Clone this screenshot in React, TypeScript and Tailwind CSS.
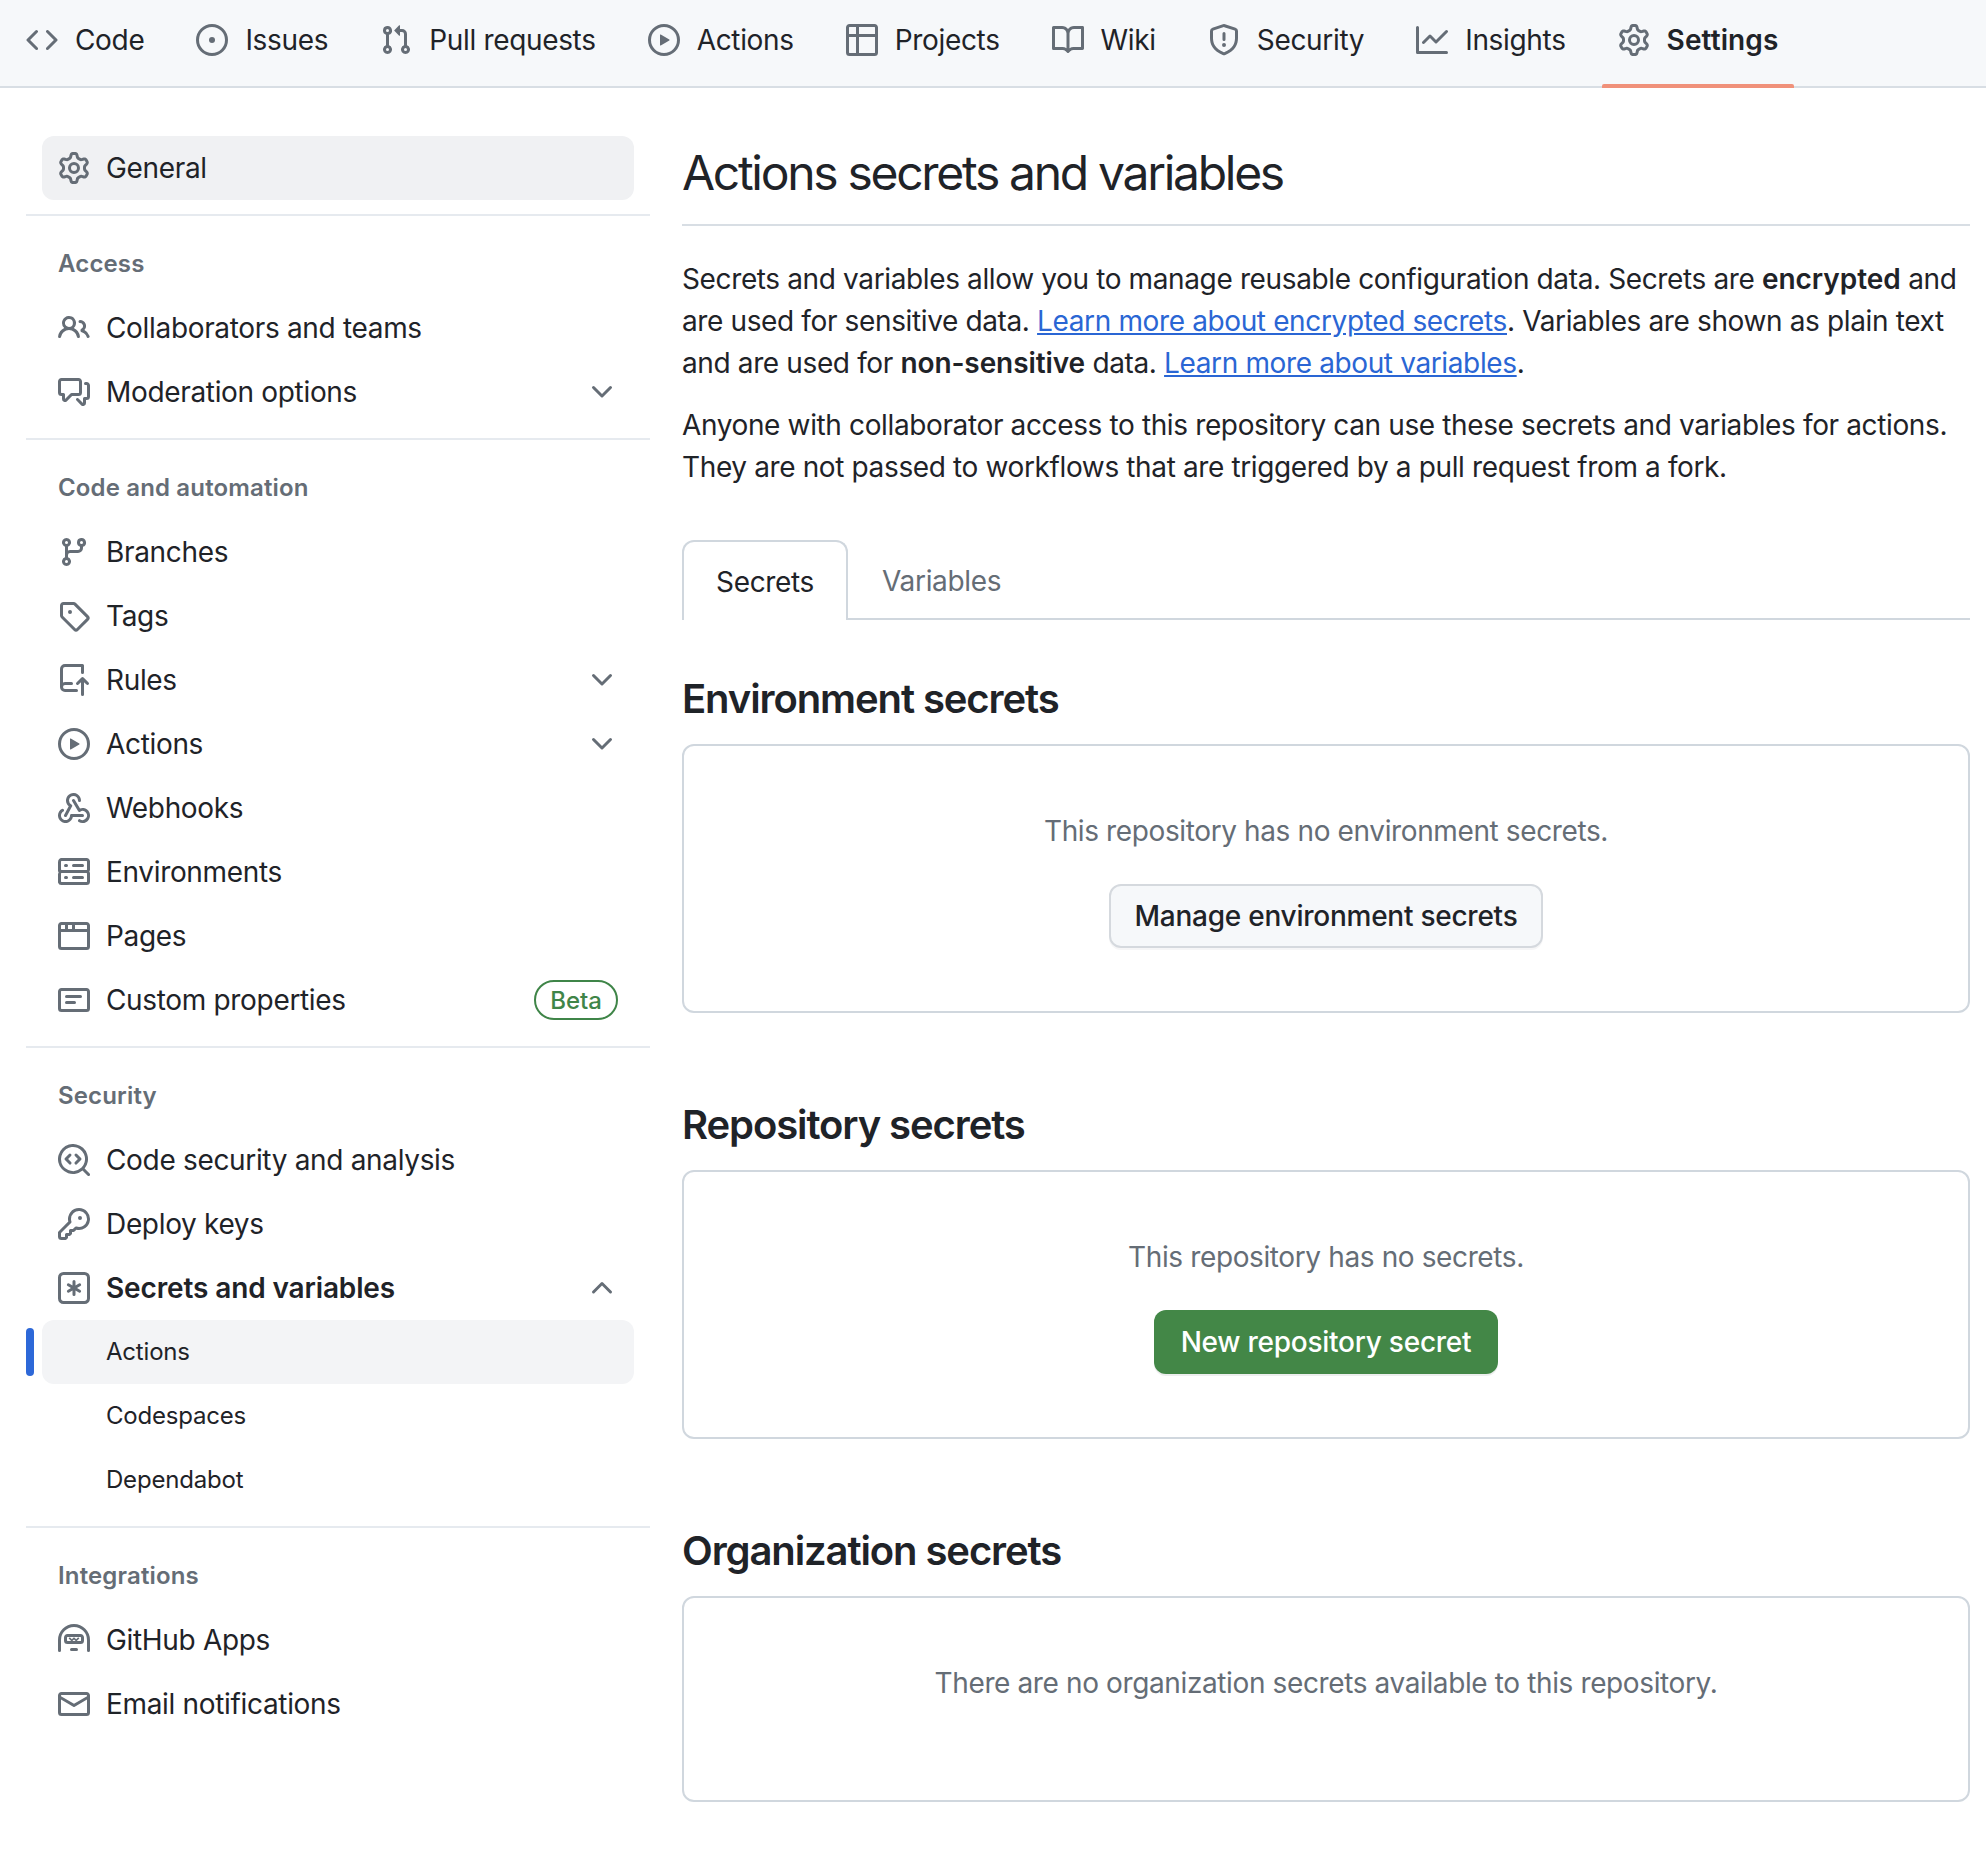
import React from 'react';

// octicons, 16px grid
const octicons: Record<string, string[]> = {
  code: ['m11.28 3.22 4.25 4.25a.75.75 0 0 1 0 1.06l-4.25 4.25a.749.749 0 0 1-1.275-.326.749.749 0 0 1 .215-.734L13.94 8l-3.72-3.72a.749.749 0 0 1 .326-1.275.749.749 0 0 1 .734.215Zm-6.56 0a.751.751 0 0 1 1.042.018.751.751 0 0 1 .018 1.042L2.06 8l3.72 3.72a.749.749 0 0 1-.326 1.275.749.749 0 0 1-.734-.215L.47 8.53a.75.75 0 0 1 0-1.06Z'],
  issue: ['M8 9.5a1.5 1.5 0 1 0 0-3 1.5 1.5 0 0 0 0 3Z', 'M8 0a8 8 0 1 1 0 16A8 8 0 0 1 8 0ZM1.5 8a6.5 6.5 0 1 0 13 0 6.5 6.5 0 0 0-13 0Z'],
  pull: ['M1.5 3.25a2.25 2.25 0 1 1 3 2.122v5.256a2.251 2.251 0 1 1-1.5 0V5.372A2.25 2.25 0 0 1 1.5 3.25Zm5.677-.177L9.573.677A.25.25 0 0 1 10 .854V2.5h1A2.5 2.5 0 0 1 13.5 5v5.628a2.251 2.251 0 1 1-1.5 0V5a1 1 0 0 0-1-1h-1v1.646a.25.25 0 0 1-.427.177L7.177 3.427a.25.25 0 0 1 0-.354ZM3.75 2.5a.75.75 0 1 0 0 1.5.75.75 0 0 0 0-1.5Zm0 9.5a.75.75 0 1 0 0 1.5.75.75 0 0 0 0-1.5Zm8.25.75a.75.75 0 1 0 1.5 0 .75.75 0 0 0-1.5 0Z'],
  play: ['M8 0a8 8 0 1 1 0 16A8 8 0 0 1 8 0ZM1.5 8a6.5 6.5 0 1 0 13 0 6.5 6.5 0 0 0-13 0Zm4.879-2.773 4.264 2.559a.25.25 0 0 1 0 .428l-4.264 2.559A.25.25 0 0 1 6 10.559V5.442a.25.25 0 0 1 .379-.215Z'],
  table: ['M0 1.75C0 .784.784 0 1.75 0h12.5C15.216 0 16 .784 16 1.75v12.5A1.75 1.75 0 0 1 14.25 16H1.75A1.75 1.75 0 0 1 0 14.25ZM6.5 6.5v8h7.75a.25.25 0 0 0 .25-.25V6.5Zm8-1.5V1.75a.25.25 0 0 0-.25-.25H6.5V5Zm-13 1.5v7.75c0 .138.112.25.25.25H5v-8ZM5 5V1.5H1.75a.25.25 0 0 0-.25.25V5Z'],
  book: ['M0 1.75A.75.75 0 0 1 .75 1h4.253c1.227 0 2.317.59 3 1.501A3.743 3.743 0 0 1 11.006 1h4.245a.75.75 0 0 1 .75.75v10.5a.75.75 0 0 1-.75.75h-4.507a2.25 2.25 0 0 0-1.591.659l-.622.621a.75.75 0 0 1-1.06 0l-.622-.621A2.25 2.25 0 0 0 5.258 13H.75a.75.75 0 0 1-.75-.75Zm7.251 10.324.004-5.073-.002-2.253A2.25 2.25 0 0 0 5.003 2.5H1.5v9h3.757a3.75 3.75 0 0 1 1.994.574ZM8.755 4.75l-.004 7.322a3.752 3.752 0 0 1 1.992-.572H14.5v-9h-3.495a2.25 2.25 0 0 0-2.25 2.25Z'],
  shield: ['M7.467.133a1.748 1.748 0 0 1 1.066 0l5.25 1.68A1.75 1.75 0 0 1 15 3.48V7c0 1.566-.32 3.182-1.303 4.682-.983 1.498-2.585 2.813-5.032 3.855a1.697 1.697 0 0 1-1.33 0c-2.447-1.042-4.049-2.357-5.032-3.855C1.32 10.182 1 8.566 1 7V3.48a1.75 1.75 0 0 1 1.217-1.667Zm.61 1.429a.25.25 0 0 0-.153 0l-5.25 1.68a.25.25 0 0 0-.174.238V7c0 1.358.275 2.666 1.057 3.86.784 1.194 2.121 2.34 4.366 3.297a.196.196 0 0 0 .154 0c2.245-.956 3.582-2.104 4.366-3.298C13.225 9.666 13.5 8.36 13.5 7V3.48a.251.251 0 0 0-.174-.237l-5.25-1.68ZM8.75 4.75v3a.75.75 0 0 1-1.5 0v-3a.75.75 0 0 1 1.5 0ZM9 10.5a1 1 0 1 1-2 0 1 1 0 0 1 2 0Z'],
  graph: ['M1.5 1.75V13.5h13.75a.75.75 0 0 1 0 1.5H.75a.75.75 0 0 1-.75-.75V1.75a.75.75 0 0 1 1.5 0Zm14.28 2.53-5.25 5.25a.75.75 0 0 1-1.06 0L7 7.06 4.28 9.78a.751.751 0 0 1-1.042-.018.751.751 0 0 1-.018-1.042l3.25-3.25a.75.75 0 0 1 1.06 0L10 7.94l4.72-4.72a.751.751 0 0 1 1.042.018.751.751 0 0 1 .018 1.042Z'],
  gear: ['M8 0a8.2 8.2 0 0 1 .701.031C9.444.095 9.99.645 10.16 1.29l.288 1.107c.018.066.079.158.212.224.231.114.454.243.668.386.123.082.233.09.299.071l1.103-.303c.644-.176 1.392.021 1.82.63.27.385.506.792.704 1.218.315.675.111 1.422-.364 1.891l-.814.806c-.049.048-.098.147-.088.294.016.257.016.515 0 .772-.01.147.038.246.088.294l.814.806c.475.469.679 1.216.364 1.891a7.977 7.977 0 0 1-.704 1.217c-.428.61-1.176.807-1.82.63l-1.102-.302c-.067-.019-.177-.011-.3.071a5.909 5.909 0 0 1-.668.386c-.133.066-.194.158-.211.224l-.29 1.106c-.168.646-.715 1.196-1.458 1.26a8.006 8.006 0 0 1-1.402 0c-.743-.064-1.289-.614-1.458-1.26l-.289-1.106c-.018-.066-.079-.158-.212-.224a5.738 5.738 0 0 1-.668-.386c-.123-.082-.233-.09-.299-.071l-1.103.303c-.644.176-1.392-.021-1.82-.63a8.12 8.12 0 0 1-.704-1.218c-.315-.675-.111-1.422.363-1.891l.815-.806c.05-.048.098-.147.088-.294a6.214 6.214 0 0 1 0-.772c.01-.147-.038-.246-.088-.294l-.815-.806C.635 6.045.431 5.298.746 4.623a7.92 7.92 0 0 1 .704-1.217c.428-.61 1.176-.807 1.82-.63l1.102.302c.067.019.177.011.3-.071.214-.143.437-.272.668-.386.133-.066.194-.158.211-.224l.29-1.106C6.009.645 6.556.095 7.299.03 7.53.01 7.764 0 8 0Zm-.571 1.525c-.036.003-.108.036-.137.146l-.289 1.105c-.147.561-.549.967-.998 1.189-.173.086-.34.183-.5.29-.417.278-.97.423-1.529.27l-1.103-.303c-.109-.03-.175.016-.195.045-.22.312-.412.644-.573.99-.014.031-.021.11.059.19l.815.806c.411.406.562.957.53 1.456a4.709 4.709 0 0 0 0 .582c.032.499-.119 1.05-.53 1.456l-.815.806c-.081.08-.073.159-.059.19.162.346.353.677.573.989.02.03.085.076.195.046l1.102-.303c.56-.153 1.113-.008 1.53.27.161.107.328.204.501.29.447.222.85.629.997 1.189l.289 1.105c.029.109.101.143.137.146a6.6 6.6 0 0 0 1.142 0c.036-.003.108-.036.137-.146l.289-1.105c.147-.561.549-.967.998-1.189.173-.086.34-.183.5-.29.417-.278.97-.423 1.529-.27l1.103.303c.109.029.175-.016.195-.045.22-.313.411-.644.573-.99.014-.031.021-.11-.059-.19l-.815-.806c-.411-.406-.562-.957-.53-1.456a4.709 4.709 0 0 0 0-.582c-.032-.499.119-1.05.53-1.456l.815-.806c.081-.08.073-.159.059-.19a6.464 6.464 0 0 0-.573-.989c-.02-.03-.085-.076-.195-.046l-1.102.303c-.56.153-1.113.008-1.53-.27a4.44 4.44 0 0 0-.501-.29c-.447-.222-.85-.629-.997-1.189l-.289-1.105c-.029-.11-.101-.143-.137-.146a6.6 6.6 0 0 0-1.142 0ZM11 8a3 3 0 1 1-6 0 3 3 0 0 1 6 0ZM9.5 8a1.5 1.5 0 1 0-3.001.001A1.5 1.5 0 0 0 9.5 8Z'],
  people: ['M2 5.5a3.5 3.5 0 1 1 5.898 2.549 5.508 5.508 0 0 1 3.034 4.084.75.75 0 1 1-1.482.235 4 4 0 0 0-7.9 0 .75.75 0 0 1-1.482-.236A5.507 5.507 0 0 1 3.102 8.05 3.493 3.493 0 0 1 2 5.5ZM11 4a3.001 3.001 0 0 1 2.22 5.018 5.01 5.01 0 0 1 2.56 3.012.749.749 0 0 1-.885.954.752.752 0 0 1-.549-.514 3.507 3.507 0 0 0-2.522-2.372.75.75 0 0 1-.574-.73v-.352a.75.75 0 0 1 .416-.672A1.5 1.5 0 0 0 11 5.5.75.75 0 0 1 11 4Zm-5.5-.5a2 2 0 1 0-.001 3.999A2 2 0 0 0 5.5 3.5Z'],
  discussion: ['M1.75 1h8.5c.966 0 1.75.784 1.75 1.75v5.5A1.75 1.75 0 0 1 10.25 10H7.061l-2.574 2.573A1.458 1.458 0 0 1 2 11.543V10h-.25A1.75 1.75 0 0 1 0 8.25v-5.5C0 1.784.784 1 1.75 1ZM1.5 2.75v5.5c0 .138.112.25.25.25h1a.75.75 0 0 1 .75.75v2.19l2.72-2.72a.749.749 0 0 1 .53-.22h3.5a.25.25 0 0 0 .25-.25v-5.5a.25.25 0 0 0-.25-.25h-8.5a.25.25 0 0 0-.25.25Zm13 2a.25.25 0 0 0-.25-.25h-.5a.75.75 0 0 1 0-1.5h.5c.966 0 1.75.784 1.75 1.75v5.5A1.75 1.75 0 0 1 14.25 12H14v1.543a1.458 1.458 0 0 1-2.487 1.03L9.22 12.28a.749.749 0 0 1 .326-1.275.749.749 0 0 1 .734.215l2.22 2.22v-2.19a.75.75 0 0 1 .75-.75h1a.25.25 0 0 0 .25-.25Z'],
  branch: ['M9.5 3.25a2.25 2.25 0 1 1 3 2.122V6A2.5 2.5 0 0 1 10 8.5H6a1 1 0 0 0-1 1v1.128a2.251 2.251 0 1 1-1.5 0V5.372a2.25 2.25 0 1 1 1.5 0v1.836A2.493 2.493 0 0 1 6 7h4a1 1 0 0 0 1-1v-.628A2.25 2.25 0 0 1 9.5 3.25Zm-6 0a.75.75 0 1 0 1.5 0 .75.75 0 0 0-1.5 0Zm8.25-.75a.75.75 0 1 0 0 1.5.75.75 0 0 0 0-1.5ZM4.25 12a.75.75 0 1 0 0 1.5.75.75 0 0 0 0-1.5Z'],
  tag: ['M1 7.775V2.75C1 1.784 1.784 1 2.75 1h5.025c.464 0 .91.184 1.238.513l6.25 6.25a1.75 1.75 0 0 1 0 2.474l-5.026 5.026a1.75 1.75 0 0 1-2.474 0l-6.25-6.25A1.752 1.752 0 0 1 1 7.775Zm1.5 0c0 .066.026.13.073.177l6.25 6.25a.25.25 0 0 0 .354 0l5.025-5.025a.25.25 0 0 0 0-.354l-6.25-6.25a.25.25 0 0 0-.177-.073H2.75a.25.25 0 0 0-.25.25ZM6 5a1 1 0 1 1 0 2 1 1 0 0 1 0-2Z'],
  repoPush: ['M1 2.5A2.5 2.5 0 0 1 3.5 0h8.75a.75.75 0 0 1 .75.75v3.5a.75.75 0 0 1-1.5 0V1.5h-8a1 1 0 0 0-1 1v6.708A2.493 2.493 0 0 1 3.5 9h3.25a.75.75 0 0 1 0 1.5H3.5a1 1 0 0 0 0 2h5.75a.75.75 0 0 1 0 1.5H3.5A2.5 2.5 0 0 1 1 11.5Zm13.23 7.79h-.001l-1.224-1.224v6.184a.75.75 0 0 1-1.5 0V9.066L10.28 10.29a.75.75 0 0 1-1.06-1.061l2.505-2.504a.75.75 0 0 1 1.06 0L15.29 9.23a.751.751 0 0 1-.018 1.042.751.751 0 0 1-1.042.018Z'],
  webhook: [
    'M5.5 4.25a2.25 2.25 0 0 1 4.5 0 .75.75 0 0 0 1.5 0 3.75 3.75 0 1 0-6.14 2.889l-2.272 4.258a.75.75 0 0 0 1.324.706L7 7.25a.75.75 0 0 0-.309-1.015A2.25 2.25 0 0 1 5.5 4.25Z',
    'M7.364 3.607a.75.75 0 0 1 1.03.257l2.608 4.349a3.75 3.75 0 1 1-.628 6.785.75.75 0 0 1 .752-1.299 2.25 2.25 0 1 0-.033-3.88.75.75 0 0 1-1.03-.256L7.107 4.636a.75.75 0 0 1 .257-1.03Z',
    'M2.9 8.776A.75.75 0 0 1 2.625 9.8 2.25 2.25 0 1 0 6 11.75a.75.75 0 0 1 .75-.751h5.5a.75.75 0 0 1 0 1.5H7.425a3.751 3.751 0 1 1-5.55-3.998.75.75 0 0 1 1.024.274Z',
  ],
  server: ['M1.75 1h12.5c.966 0 1.75.784 1.75 1.75v4c0 .372-.116.717-.314 1 .198.283.314.628.314 1v4a1.75 1.75 0 0 1-1.75 1.75H1.75A1.75 1.75 0 0 1 0 13.25v-4c0-.372.116-.717.314-1a1.739 1.739 0 0 1-.314-1v-4C0 1.784.784 1 1.75 1ZM1.5 2.75v4c0 .138.112.25.25.25h12.5a.25.25 0 0 0 .25-.25v-4a.25.25 0 0 0-.25-.25H1.75a.25.25 0 0 0-.25.25Zm.25 5.75a.25.25 0 0 0-.25.25v4c0 .138.112.25.25.25h12.5a.25.25 0 0 0 .25-.25v-4a.25.25 0 0 0-.25-.25ZM7 4.75A.75.75 0 0 1 7.75 4h4.5a.75.75 0 0 1 0 1.5h-4.5A.75.75 0 0 1 7 4.75ZM7.75 10h4.5a.75.75 0 0 1 0 1.5h-4.5a.75.75 0 0 1 0-1.5ZM3 4.75A.75.75 0 0 1 3.75 4h.5a.75.75 0 0 1 0 1.5h-.5A.75.75 0 0 1 3 4.75ZM3.75 10h.5a.75.75 0 0 1 0 1.5h-.5a.75.75 0 0 1 0-1.5Z'],
  browser: ['M0 2.75C0 1.784.784 1 1.75 1h12.5c.966 0 1.75.784 1.75 1.75v10.5A1.75 1.75 0 0 1 14.25 15H1.75A1.75 1.75 0 0 1 0 13.25ZM14.5 6h-13v7.25c0 .138.112.25.25.25h12.5a.25.25 0 0 0 .25-.25Zm-6-3.5v2h6V2.75a.25.25 0 0 0-.25-.25ZM5 2.5v2h2v-2Zm-3.25 0a.25.25 0 0 0-.25.25V4.5h2v-2Z'],
  note: ['M0 3.75C0 2.784.784 2 1.75 2h12.5c.966 0 1.75.784 1.75 1.75v8.5A1.75 1.75 0 0 1 14.25 14H1.75A1.75 1.75 0 0 1 0 12.25Zm1.75-.25a.25.25 0 0 0-.25.25v8.5c0 .138.112.25.25.25h12.5a.25.25 0 0 0 .25-.25v-8.5a.25.25 0 0 0-.25-.25ZM3.5 6.25a.75.75 0 0 1 .75-.75h7a.75.75 0 0 1 0 1.5h-7a.75.75 0 0 1-.75-.75Zm.75 2.25h4a.75.75 0 0 1 0 1.5h-4a.75.75 0 0 1 0-1.5Z'],
  codescan: [
    'M8.47 4.97a.75.75 0 0 0 0 1.06L9.94 7.5 8.47 8.97a.75.75 0 1 0 1.06 1.06l2-2a.75.75 0 0 0 0-1.06l-2-2a.75.75 0 0 0-1.06 0ZM6.53 6.03a.75.75 0 0 0-1.06-1.06l-2 2a.75.75 0 0 0 0 1.06l2 2a.75.75 0 1 0 1.06-1.06L5.06 7.5l1.47-1.47Z',
    'M12.246 13.307a7.501 7.501 0 1 1 1.06-1.06l2.474 2.473a.749.749 0 0 1-.326 1.275.749.749 0 0 1-.734-.215ZM1.5 7.5a6.002 6.002 0 0 0 3.608 5.504 6.002 6.002 0 0 0 6.486-1.117.75.75 0 0 1 .293-.293A6 6 0 1 0 1.5 7.5Z',
  ],
  key: ['M10.5 0a5.499 5.499 0 1 1-1.288 10.848l-.932.932a.749.749 0 0 1-.53.22H7v.75a.749.749 0 0 1-.22.53l-.5.5a.749.749 0 0 1-.53.22H5v.75a.749.749 0 0 1-.22.53l-.5.5a.749.749 0 0 1-.53.22h-2A1.75 1.75 0 0 1 0 14.25v-2c0-.199.079-.389.22-.53l4.932-4.932A5.5 5.5 0 0 1 10.5 0Zm-4 5.5c-.001.431.069.86.205 1.269a.75.75 0 0 1-.181.768L1.5 12.56v1.69c0 .138.112.25.25.25h1.69l.06-.06v-1.19a.75.75 0 0 1 .75-.75h1.19l.06-.06v-1.19a.75.75 0 0 1 .75-.75h1.19l1.023-1.025a.75.75 0 0 1 .768-.18A4 4 0 1 0 6.5 5.5ZM11 6a1 1 0 1 1 0-2 1 1 0 0 1 0 2Z'],
  keyAsterisk: [
    'M0 2.75A2.75 2.75 0 0 1 2.75 0h10.5A2.75 2.75 0 0 1 16 2.75v10.5A2.75 2.75 0 0 1 13.25 16H2.75A2.75 2.75 0 0 1 0 13.25ZM2.75 1.5c-.69 0-1.25.56-1.25 1.25v10.5c0 .69.56 1.25 1.25 1.25h10.5c.69 0 1.25-.56 1.25-1.25V2.75c0-.69-.56-1.25-1.25-1.25Z',
    'M8 4a.75.75 0 0 1 .75.75V6.7l1.69-.975a.75.75 0 0 1 .75 1.3L9.5 8l1.69.976a.75.75 0 0 1-.75 1.298L8.75 9.3v1.951a.75.75 0 0 1-1.5 0V9.299l-1.69.976a.75.75 0 0 1-.75-1.3L6.5 8l-1.69-.975a.75.75 0 0 1 .75-1.3l1.69.976V4.75A.75.75 0 0 1 8 4Z',
  ],
  hubot: [
    'M0 8a8 8 0 0 1 16 0v5.25a.75.75 0 0 1-1.5 0V8a6.5 6.5 0 1 0-13 0v5.25a.75.75 0 0 1-1.5 0Z',
    'M3 6.75C3 5.784 3.784 5 4.75 5h6.5c.966 0 1.75.784 1.75 1.75v1.5A1.75 1.75 0 0 1 11.25 10h-6.5A1.75 1.75 0 0 1 3 8.25Zm1.75-.25a.25.25 0 0 0-.25.25v1.5c0 .138.112.25.25.25h6.5a.25.25 0 0 0 .25-.25v-1.5a.25.25 0 0 0-.25-.25Z',
    'M5.3 7.2l.6-.6 1 1 1.1-1 1.1 1 1-1 .6.6-1.6 1.6-1.1-1-1.1 1Z',
    'M6 12.75a.75.75 0 0 1 .75-.75h2.5a.75.75 0 0 1 0 1.5h-2.5a.75.75 0 0 1-.75-.75Z',
  ],
  mail: ['M1.75 2h12.5c.966 0 1.75.784 1.75 1.75v8.5A1.75 1.75 0 0 1 14.25 14H1.75A1.75 1.75 0 0 1 0 12.25v-8.5C0 2.784.784 2 1.75 2ZM1.5 12.251c0 .138.112.25.25.25h12.5a.25.25 0 0 0 .25-.25V5.809L8.38 9.397a.75.75 0 0 1-.76 0L1.5 5.809v6.442Zm13-8.181v-.32a.25.25 0 0 0-.25-.25H1.75a.25.25 0 0 0-.25.25v.32L8 7.88Z'],
  chevronDown: ['M12.78 5.22a.749.749 0 0 1 0 1.06l-4.25 4.25a.749.749 0 0 1-1.06 0L3.22 6.28a.749.749 0 1 1 1.06-1.06L8 8.939l3.72-3.719a.749.749 0 0 1 1.06 0Z'],
  chevronUp: ['M3.22 10.53a.749.749 0 0 1 0-1.06l4.25-4.25a.749.749 0 0 1 1.06 0l4.25 4.25a.749.749 0 1 1-1.06 1.06L8 6.811 4.28 10.53a.749.749 0 0 1-1.06 0Z'],
};

const Octicon = ({ name }: { name: string }) => (
  <svg width={32} height={32} viewBox="0 0 16 16" fill="currentColor" className="shrink-0 text-[#656d76]">
    {octicons[name].map((d) => (
      <path key={d} d={d} />
    ))}
  </svg>
);

const tabs: { label: string; icon: string; active?: boolean }[] = [
  { label: 'Code', icon: 'code' },
  { label: 'Issues', icon: 'issue' },
  { label: 'Pull requests', icon: 'pull' },
  { label: 'Actions', icon: 'play' },
  { label: 'Projects', icon: 'table' },
  { label: 'Wiki', icon: 'book' },
  { label: 'Security', icon: 'shield' },
  { label: 'Insights', icon: 'graph' },
  { label: 'Settings', icon: 'gear', active: true },
];

interface SideItem {
  label: string;
  icon?: string;
  chevron?: 'chevronDown' | 'chevronUp';
  beta?: boolean;
  bold?: boolean;
  sub?: boolean;
  selected?: boolean;
}

const sections: { title: string; items: SideItem[] }[] = [
  {
    title: 'Access',
    items: [
      { label: 'Collaborators and teams', icon: 'people' },
      { label: 'Moderation options', icon: 'discussion', chevron: 'chevronDown' },
    ],
  },
  {
    title: 'Code and automation',
    items: [
      { label: 'Branches', icon: 'branch' },
      { label: 'Tags', icon: 'tag' },
      { label: 'Rules', icon: 'repoPush', chevron: 'chevronDown' },
      { label: 'Actions', icon: 'play', chevron: 'chevronDown' },
      { label: 'Webhooks', icon: 'webhook' },
      { label: 'Environments', icon: 'server' },
      { label: 'Pages', icon: 'browser' },
      { label: 'Custom properties', icon: 'note', beta: true },
    ],
  },
  {
    title: 'Security',
    items: [
      { label: 'Code security and analysis', icon: 'codescan' },
      { label: 'Deploy keys', icon: 'key' },
      { label: 'Secrets and variables', icon: 'keyAsterisk', chevron: 'chevronUp', bold: true },
      { label: 'Actions', sub: true, selected: true },
      { label: 'Codespaces', sub: true },
      { label: 'Dependabot', sub: true },
    ],
  },
  {
    title: 'Integrations',
    items: [
      { label: 'GitHub Apps', icon: 'hubot' },
      { label: 'Email notifications', icon: 'mail' },
    ],
  },
];

const SideRow = ({ item }: { item: SideItem }) => (
  <div className={`relative mx-4 flex h-16 items-center gap-4 rounded-xl px-4 ${item.selected ? 'bg-[#f3f4f6]' : ''}`}>
    {item.selected && <span className="absolute -left-4 top-2 h-12 w-2 rounded-full bg-[#2d68d8]" />}
    {item.icon ? <Octicon name={item.icon} /> : <span className="w-8 shrink-0" />}
    <span
      className={`flex-1 whitespace-nowrap ${item.sub ? 'text-[24px] tracking-[-0.2px]' : 'text-[28px]'} ${
        item.bold ? 'font-semibold tracking-[-0.13px]' : ''
      }`}
    >
      {item.label}
    </span>
    {item.chevron && <Octicon name={item.chevron} />}
    {item.beta && (
      <span className="flex h-10 items-center rounded-full border-2 border-[#3f8548] px-[14px] pt-[1px] text-[24px] font-medium tracking-normal text-[#3f8548]">
        Beta
      </span>
    )}
  </div>
);

export default function App() {
  return (
    <div className="min-h-screen bg-white font-['Inter','Liberation_Sans',sans-serif] tracking-[-0.33px] text-[#1f2328]">
      <nav className="flex h-[88px] gap-[52px] border-b-2 border-[#d8dee4] bg-[#f6f8fa] pl-[26px]">
        {tabs.map((tab) => (
          <div key={tab.label} className="relative flex items-center gap-[17px] pb-[6px]">
            <Octicon name={tab.icon} />
            <span className={`text-[28px] ${tab.active ? 'font-semibold tracking-[0.1px]' : ''}`}>{tab.label}</span>
            {tab.active && (
              <span className="absolute -bottom-[2px] -left-4 -right-4 h-1 rounded-t-[2px] bg-[#f0917a]" />
            )}
          </div>
        ))}
      </nav>

      <div className="flex pt-12">
        <aside className="ml-[26px] w-[624px] shrink-0">
          <div className="mx-4 flex h-16 items-center gap-4 rounded-xl bg-[#f0f1f3] px-4">
            <Octicon name="gear" />
            <span className="text-[28px]">General</span>
          </div>
          {sections.map((section) => (
            <div key={section.title}>
              <div className="mt-[14px] h-[2px] bg-[#e6eaef]" />
              <h3 className="mb-2 mt-6 flex h-12 items-center px-8 text-[24px] font-semibold tracking-[0.15px] text-[#656d76]">
                {section.title}
              </h3>
              {section.items.map((item) => (
                <SideRow key={item.label + (item.sub ? '-sub' : '')} item={item} />
              ))}
            </div>
          ))}
        </aside>

        <main className="ml-8 w-[1288px] shrink-0 pb-[72px]">
          <h1 className="border-b-2 border-[#d8dee4] pb-[15px] pt-[1px] text-[48px] font-normal leading-[72px] tracking-[-2.3px]">
            Actions secrets and variables
          </h1>
          <p className="mt-8 whitespace-nowrap text-[28px] leading-[42px] tracking-[-0.37px]">
            Secrets and variables allow you to manage reusable configuration data. Secrets are{' '}
            <strong className="font-semibold tracking-[-0.05px]">encrypted</strong> and
            <br />
            are used for sensitive data. <a className="text-[#2a66d4] underline">Learn more about encrypted secrets</a>.
            Variables are shown as plain text
            <br />
            and are used for <strong className="font-semibold tracking-[-0.1px]">non-sensitive</strong> data.{' '}
            <a className="text-[#2a66d4] underline">Learn more about variables</a>.
          </p>
          <p className="mt-5 whitespace-nowrap text-[28px] leading-[42px] tracking-[-0.37px]">
            Anyone with collaborator access to this repository can use these secrets and variables for actions.
            <br />
            They are not passed to workflows that are triggered by a pull request from a fork.
          </p>

          <div className="mt-[52px] flex h-20 border-b-2 border-[#d0d7de] text-[28px]">
            <div className="-mb-[2px] flex h-20 items-center rounded-t-xl border-2 border-b-0 border-[#d0d7de] bg-white px-8 pt-[2px]">
              Secrets
            </div>
            <div className="-mb-[2px] flex items-center pl-[34px] pt-[2px] text-[#656d76]">Variables</div>
          </div>

          <h2 className="mb-[15px] mt-[49px] text-[40px] font-semibold leading-[60px] tracking-[-1.1px]">Environment secrets</h2>
          <div className="flex flex-col items-center rounded-xl border-2 border-[#d0d7de] pb-[63px] pt-16">
            <p className="text-[28px] leading-[42px] tracking-[-0.38px] text-[#656d76]">This repository has no environment secrets.</p>
            <button className="mt-8 h-16 rounded-xl border-2 border-[#d5d9de] bg-[#f6f8fa] px-6 text-[28px] font-medium tracking-[-0.25px] shadow-[0_2px_0_rgba(31,35,40,0.04)]">
              Manage environment secrets
            </button>
          </div>

          <h2 className="mb-[15px] mt-[82px] text-[40px] font-semibold leading-[60px] tracking-[-1.1px]">Repository secrets</h2>
          <div className="flex flex-col items-center rounded-xl border-2 border-[#d0d7de] pb-[63px] pt-16">
            <p className="text-[28px] leading-[42px] tracking-[-0.38px] text-[#656d76]">This repository has no secrets.</p>
            <button className="mt-8 h-16 rounded-xl bg-[#438747] px-[27px] text-[28px] font-medium tracking-[-0.25px] text-white shadow-[0_2px_0_rgba(31,35,40,0.08)]">
              New repository secret
            </button>
          </div>

          <h2 className="mb-[15px] mt-[82px] text-[40px] font-semibold leading-[60px] tracking-[-1.1px]">Organization secrets</h2>
          <div className="flex flex-col items-center rounded-xl border-2 border-[#d0d7de] pb-24 pt-16">
            <p className="text-[28px] leading-[42px] tracking-[-0.38px] text-[#656d76]">There are no organization secrets available to this repository.</p>
          </div>
        </main>
      </div>
    </div>
  );
}
